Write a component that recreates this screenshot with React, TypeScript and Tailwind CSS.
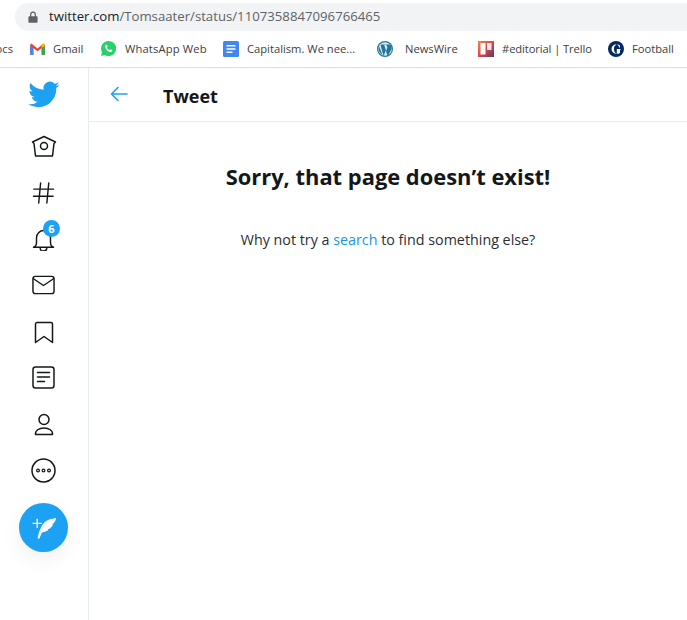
const font = { fontFamily: '"Open Sans", "Noto Sans", sans-serif' };

function Bookmark({ icon, label, gap, width, track = '' }: { icon: React.ReactNode; label: string; gap: string; width: string; track?: string }) {
  return (
    <div className={`flex items-center shrink-0 ${gap} ${width}`}>
      {icon}
      <span className={`text-[11.2px] leading-none text-[#3c4043] whitespace-nowrap ${track}`}>{label}</span>
    </div>
  );
}

const GmailIcon = (
  <svg viewBox="0 0 16 13" className="w-[15px] h-[12px] shrink-0">
    <path d="M0 2v10a1 1 0 0 0 1 1h2.500V5.500L8 9l4.500-3.500V13H15a1 1 0 0 0 1-1V2l-1.500-1.500L8 6 1.500.5z" fill="#ea4335" />
    <path d="M0 3v9a1 1 0 0 0 1 1h2.500V5.500z" fill="#4285f4" />
    <path d="M16 3v9a1 1 0 0 1-1 1h-2.500V5.500z" fill="#34a853" />
    <path d="M12.500 5.500V2l1-1.500L16 2v1z" fill="#fbbc04" />
  </svg>
);
const WhatsAppIcon = (
  <svg viewBox="0 0 16 16" className="w-[15px] h-[15px] shrink-0">
    <path d="M8 0a8 8 0 0 0-6.900 12L0 16l4.100-1.100A8 8 0 1 0 8 0z" fill="#25d366" />
    <path d="M5.500 4c-.8.500-1.300 1.500-1 2.700.5 2.300 2.700 4.500 5 5 1.200.2 2.200-.3 2.600-1.100l-.1-.9-1.800-.9-.9.900c-1.300-.4-2.500-1.600-3-2.900l.8-.9-.8-1.800z" fill="#fff" />
  </svg>
);
const DocsIcon = (
  <svg viewBox="0 0 16 16" className="w-[16px] h-[16px] shrink-0">
    <rect width="16" height="16" rx="1.500" fill="#4285f4" />
    <path d="M3.500 4h9v1.500h-9zM3.500 7.200h9v1.500h-9zM3.500 10.400h6v1.500h-6z" fill="#fff" />
  </svg>
);
const WordPressIcon = (
  <svg viewBox="0 0 16 16" className="w-[16px] h-[16px] shrink-0">
    <circle cx="8" cy="8" r="8" fill="#21759b" />
    <circle cx="8" cy="8" r="6.800" fill="#d8e8ef" />
    <path d="M2.200 5.500 5.400 14a6.800 6.800 0 0 1-3.200-8.500zM4 3.500h4.200v.6l-1 .1 2 5.800 1.200-3.400-.8-2.400-.7-.1v-.6h4.100c1 1.200 1.700 3 1.500 4.500l-3.700 7.300-2.100-5.700-2.100 5.700L3.600 4.200z" fill="#21759b" />
  </svg>
);
const TrelloIcon = (
  <svg viewBox="0 0 16 16" className="w-[16px] h-[16px] shrink-0">
    <defs>
      <linearGradient id="tr" x1="0" y1="0" x2="1" y2="1">
        <stop offset="0" stopColor="#f08a4b" />
        <stop offset="0.5" stopColor="#d9484f" />
        <stop offset="1" stopColor="#5b3b66" />
      </linearGradient>
    </defs>
    <rect width="16" height="16" fill="url(#tr)" />
    <rect x="2.500" y="2" width="5" height="11.500" fill="#fff" />
    <rect x="9" y="2" width="4.500" height="7" fill="#f3e6e6" />
  </svg>
);
const GuardianIcon = (
  <svg viewBox="0 0 16 16" className="w-[16px] h-[16px] shrink-0">
    <circle cx="8" cy="8" r="8" fill="#052962" />
    <path d="M9 3.200c1.300.1 2.300.6 3 1.300v2.300h-.4L9.700 3.800 9 3.700zM8.300 3.700C6.600 4.300 6 6 6 8s.6 3.700 2.300 4.300v.4C5.400 12.500 3.500 10.600 3.500 8s1.900-4.500 4.800-4.800zM8.800 8h4v.4l-.8.3v3.200c-.7.500-1.800.9-3.200.9z" fill="#fff" />
  </svg>
);

const stroke = { fill: 'none', stroke: '#14171a', strokeWidth: 1.500, strokeLinecap: 'round' as const, strokeLinejoin: 'round' as const };

function NavItem({ children }: { children: React.ReactNode }) {
  return <div className="relative h-[46.2px] flex items-center justify-center">{children}</div>;
}

export default function App() {
  return (
    <div className="w-[687px] h-[620px] bg-white overflow-hidden flex flex-col" style={font}>
      <div className="h-[68px] shrink-0 border-b border-[#dadce0] flex flex-col pt-[3px]">
        <div className="ml-[15px] h-[28px] shrink-0 bg-[#f1f3f4] rounded-l-full flex items-center pl-[13px]">
          <svg viewBox="0 0 12 14" className="w-[10px] h-[12px] shrink-0">
            <path d="M2.500 6V4a3.500 3.500 0 0 1 7 0v2h1a1 1 0 0 1 1 1v6a1 1 0 0 1-1 1h-9a1 1 0 0 1-1-1V7a1 1 0 0 1 1-1zM4 6h4V4a2 2 0 0 0-4 0z" fill="#5f6368" />
          </svg>
          <span className="ml-[11px] text-[13.2px] leading-none whitespace-nowrap text-[#5f6368]">
            <span className="text-[#202124]">twitter.com</span>/Tomsaater/status/1107358847096766465
          </span>
        </div>
        <div className="flex-1 flex items-center pb-[1px] overflow-hidden">
          <div className="w-[30px] shrink-0">
            <div className="w-[13px] flex justify-end overflow-hidden">
              <span className="shrink-0 text-[11.2px] leading-none text-[#3c4043] whitespace-nowrap">Docs</span>
            </div>
          </div>
          <Bookmark icon={GmailIcon} label="Gmail" gap="gap-[8px]" width="w-[71px]" />
          <Bookmark icon={WhatsAppIcon} label="WhatsApp Web" gap="gap-[9px]" width="w-[122px]" track="tracking-[0.15px]" />
          <Bookmark icon={DocsIcon} label="Capitalism. We nee..." gap="gap-[8px]" width="w-[154px]" />
          <Bookmark icon={WordPressIcon} label="NewsWire" gap="gap-[12px]" width="w-[101px]" />
          <Bookmark icon={TrelloIcon} label="#editorial | Trello" gap="gap-[8px]" width="w-[130px]" track="tracking-[-0.1px]" />
          <Bookmark icon={GuardianIcon} label="Football" gap="gap-[8px]" width="w-[70px]" />
        </div>
      </div>

      <div className="flex-1 flex min-h-0">
        <aside className="w-[89px] shrink-0 border-r border-[#e6ecf0] flex flex-col pt-[3px]">
          <div className="h-[46px] flex items-center justify-center mb-[6px]">
            <svg viewBox="0 0 24 24" className="w-[33px] h-[33px] -ml-[1px]" fill="#1da1f2">
              <path d="M23.643 4.937c-.835.370-1.732.620-2.675.733a4.670 4.670 0 0 0 2.048-2.578 9.300 9.300 0 0 1-2.958 1.130 4.660 4.660 0 0 0-7.938 4.250 13.229 13.229 0 0 1-9.602-4.868c-.400.690-.630 1.490-.630 2.342A4.660 4.660 0 0 0 3.960 9.824a4.647 4.647 0 0 1-2.110-.583v.060a4.660 4.660 0 0 0 3.737 4.568 4.692 4.692 0 0 1-2.104.080 4.661 4.661 0 0 0 4.350 3.234 9.340 9.340 0 0 1-5.786 1.995 9.500 9.500 0 0 1-1.112-.065 13.175 13.175 0 0 0 7.140 2.093c8.570 0 13.255-7.098 13.255-13.254 0-.200-.005-.402-.014-.602a9.470 9.470 0 0 0 2.323-2.410z" />
            </svg>
          </div>
          <div className="flex flex-col pt-[1px] -ml-[1px]">
            <NavItem>
              <svg viewBox="0 0 26 24" className="w-[26px] h-[24px]" {...stroke}>
                <path d="M1.500 7 13 1.500 24.500 7l-1.500 1.500-1.500 12.500H4.500L3 8.500z" />
                <circle cx="13" cy="11" r="3.500" />
              </svg>
            </NavItem>
            <NavItem>
              <svg viewBox="0 0 24 24" className="w-[23px] h-[23px] -mt-[1px]" {...stroke}>
                <path d="M2 8.500h20.500M1.500 16h20.500M9 2 7 23M17.500 2l-2 21" />
              </svg>
            </NavItem>
            <NavItem>
              <svg viewBox="0 0 24 24" className="w-[23px] h-[23px]" {...stroke}>
                <path d="M1.500 20c1.500-.500 3.200-2 3.200-5V10a7.300 7.300 0 0 1 14.600 0v5c0 3 1.700 4.500 3.200 5z" />
                <path d="M8.500 20.500a3.500 3.500 0 0 0 7 0" />
              </svg>
              <span className="absolute left-[44px] top-[4px] w-[17px] h-[17px] rounded-full bg-[#1da1f2] text-white text-[11px] font-bold leading-[17px] text-center">6</span>
            </NavItem>
            <NavItem>
              <svg viewBox="0 0 24 20" className="w-[23px] h-[20px] -mt-[1px]" {...stroke}>
                <rect x="1" y="1" width="22" height="18" rx="2.500" />
                <path d="M1.500 3.500 12 10.500l10.500-7" />
              </svg>
            </NavItem>
            <NavItem>
              <svg viewBox="0 0 20 23" className="w-[20px] h-[23px] mt-[1px]" {...stroke}>
                <path d="M1.500 21.500V3a1.500 1.500 0 0 1 1.500-1.500h14A1.500 1.500 0 0 1 18.500 3v18.500L10 15.500z" />
              </svg>
            </NavItem>
            <NavItem>
              <svg viewBox="0 0 23 23" className="w-[23px] h-[23px] -mt-[1px]" {...stroke}>
                <rect x="1" y="1" width="21" height="21" rx="2.500" />
                <path d="M5.500 6.500h12M5.500 11h12M5.500 15.500h7" />
              </svg>
            </NavItem>
            <NavItem>
              <svg viewBox="0 0 20 23" className="w-[20px] h-[23px]" {...stroke}>
                <circle cx="10" cy="6.500" r="5" />
                <path d="M1.500 21.500c-.500-4 3.500-6.500 8.500-6.500s9 2.500 8.500 6.500z" />
              </svg>
            </NavItem>
            <NavItem>
              <svg viewBox="0 0 25 25" className="w-[25px] h-[25px]" {...stroke}>
                <circle cx="12.500" cy="12.500" r="11.500" />
                <circle cx="7" cy="12.500" r="1.400" strokeWidth="1.200" />
                <circle cx="12.500" cy="12.500" r="1.400" strokeWidth="1.200" />
                <circle cx="18" cy="12.500" r="1.400" strokeWidth="1.200" />
              </svg>
            </NavItem>
          </div>
          <div className="mt-[9px] ml-[19px] w-[49px] h-[49px] rounded-full bg-[#1da1f2] shadow-[0_8px_20px_rgba(0,0,0,0.06)] flex items-center justify-center">
            <svg viewBox="0 0 26 26" className="w-[26px] h-[26px]" fill="#fff">
              <path d="M1.500 8.800h4V4.800h1.300v4h4v1.300h-4v4H5.500v-4h-4z" />
              <path d="M6.500 24.500C8 17 11 9 16 6.500c3-1.500 6-2 9-2.500-.2 2-1 4-2.500 5.500l-2 .8 1.700.3c-.8 1.700-2 3.200-3.700 4.200l-2 .4 1 .8c-1.700 1.300-4 2-6.500 2.400-.8 1.700-1.800 3.700-2.500 6z" />
            </svg>
          </div>
        </aside>

        <main className="flex-1 flex flex-col min-w-0">
          <div className="h-[54px] shrink-0 border-b border-[#e6ecf0] flex items-center pl-[21px]">
            <svg viewBox="0 0 18 16" className="w-[18px] h-[16px] -mt-[2px]" fill="none" stroke="#1da1f2" strokeWidth="1.600" strokeLinecap="round" strokeLinejoin="round">
              <path d="M17 8H1.500M8 1.500 1.500 8 8 14.500" />
            </svg>
            <h2 className="ml-[35px] mt-[3px] text-[18px] font-bold leading-none text-[#14171a]">Tweet</h2>
          </div>
          <h1 className="mt-[41px] text-center text-[21.9px] font-bold leading-[28px] text-[#14171a] whitespace-nowrap">Sorry, that page doesn’t exist!</h1>
          <p className="mt-[39px] text-center text-[14.3px] leading-[20px] text-[#2b2f33] whitespace-nowrap">
            Why not try a <span className="text-[#1b95e0]">search</span> to find something else?
          </p>
        </main>
      </div>
    </div>
  );
}
